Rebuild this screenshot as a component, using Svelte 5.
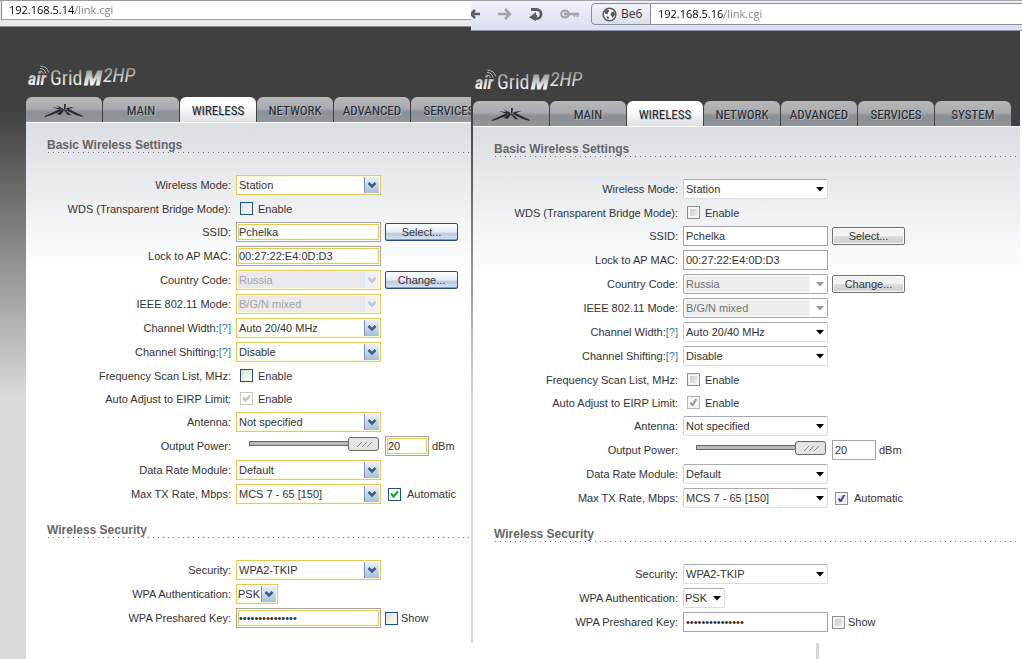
<script lang="ts">
  type Theme = "gold" | "plain";

  const tabs = ["MAIN", "WIRELESS", "NETWORK", "ADVANCED", "SERVICES", "SYSTEM"];

  const basic = [
    { id: "mode", label: "Wireless Mode:", kind: "select", value: "Station" },
    { id: "wds", label: "WDS (Transparent Bridge Mode):", kind: "check" },
    { id: "ssid", label: "SSID:", kind: "text", value: "Pchelka", button: "Select..." },
    { id: "mac", label: "Lock to AP MAC:", kind: "text", value: "00:27:22:E4:0D:D3" },
    { id: "country", label: "Country Code:", kind: "select", value: "Russia", disabled: true, button: "Change..." },
    { id: "ieee", label: "IEEE 802.11 Mode:", kind: "select", value: "B/G/N mixed", disabled: true },
    { id: "width", label: "Channel Width:", help: true, kind: "select", value: "Auto 20/40 MHz" },
    { id: "shift", label: "Channel Shifting:", help: true, kind: "select", value: "Disable" },
    { id: "scan", label: "Frequency Scan List, MHz:", kind: "check" },
    { id: "eirp", label: "Auto Adjust to EIRP Limit:", kind: "check", checked: true, disabled: true },
    { id: "antenna", label: "Antenna:", kind: "select", value: "Not specified" },
    { id: "power", label: "Output Power:", kind: "slider" },
    { id: "module", label: "Data Rate Module:", kind: "select", value: "Default" },
    { id: "rate", label: "Max TX Rate, Mbps:", kind: "select", value: "MCS 7 - 65 [150]", extra: "Automatic", checked: true },
  ];

  const security = [
    { id: "security", label: "Security:", kind: "select", value: "WPA2-TKIP" },
    { id: "auth", label: "WPA Authentication:", kind: "select", value: "PSK", short: true },
    { id: "key", label: "WPA Preshared Key:", kind: "password", value: "pchelka20122013", extra: "Show" },
  ];
</script>

{#snippet logo(theme: Theme)}
  <svg class="logo" width="114" height="34" viewBox="0 -6 114 34" role="img" aria-label="airGrid M2HP">
    <defs>
      <linearGradient id="{theme}-shine" gradientUnits="userSpaceOnUse" x1="0" y1="4" x2="0" y2="22">
        <stop offset="0" stop-color="#8c8c8c" />
        <stop offset="0.6" stop-color="#d8d8d8" />
        <stop offset="1" stop-color="#fff" />
      </linearGradient>
    </defs>
    <g fill="url(#{theme}-shine)">
      <text class="air" x="0" y="21">air</text>
      <text class="grid" x="22" y="21">Grid</text>
      <text class="m" x="56" y="21" stroke="url(#{theme}-shine)">M</text>
      <text class="hp" x="75" y="18">2HP</text>
    </g>
    <g fill="none" stroke="#b5b5b5" stroke-width="1">
      <path d="M12 7q3 0 3.500 3" />
      <path d="M12 4.500q5 0 6 5" />
      <path d="M12.500 2q7 .5 8 6.500" />
    </g>
  </svg>
{/snippet}

{#snippet antennaIcon()}
  <svg width="40" height="14" viewBox="0 0 120 42" aria-hidden="true">
    <g fill="#24272b">
      <path d="M1 37 46 16 54 20 22 33 4 39Z" />
      <path d="M118 37 74 15 65 18 96 33 114 38Z" />
      <path d="M24 10 54 13 58 18 40 15Z" />
      <path d="M92 8 68 12 64 17 78 14Z" />
      <path d="M60 0 66 1 64 16 60 16Z" />
      <path d="M38 31 56 17 61 18 50 32Z" />
      <path d="M82 34 63 17 59 18 72 33Z" />
      <path d="M36 3 58 14 60 18 44 10Z" />
    </g>
  </svg>
{/snippet}

{#snippet row(r: any, theme: Theme)}
  <div class={["row", r.kind === "check" && "tight"]}>
    <div class="label">
      <label for="{theme}-{r.id}">{r.label}</label>{#if r.help}<a href="#help">[?]</a>{/if}
    </div>
    {#if r.kind === "select"}
      <select id="{theme}-{r.id}" class={["field", r.short && "short"]} disabled={r.disabled}>
        <option>{r.value}</option>
      </select>
    {:else if r.kind === "check"}
      <div class="tick">
        <input type="checkbox" id="{theme}-{r.id}" checked={r.checked} disabled={r.disabled} />
        <label for="{theme}-{r.id}">Enable</label>
      </div>
    {:else if r.kind === "slider"}
      <div class="range">
        <input type="range" id="{theme}-{r.id}" min="0" max="20" value="20" />
      </div>
      <span class={["box", "small"]}><input type="text" value="20" aria-label="Output power" /></span>
      <span class="unit">dBm</span>
    {:else}
      <span class="box"><input type={r.kind} id="{theme}-{r.id}" value={r.value} autocomplete="off" /></span>
    {/if}
    {#if r.button}
      <button type="button">{r.button}</button>
    {/if}
    {#if r.extra}
      <div class={["extra", r.checked && "wide"]}>
        <input type="checkbox" id="{theme}-{r.id}-x" checked={r.checked} />
        <label for="{theme}-{r.id}-x">{r.extra}</label>
      </div>
    {/if}
  </div>
{/snippet}

{#snippet settings(theme: Theme)}
  <div class="site">
    <header>{@render logo(theme)}</header>
    <nav>
      <a href="#about" aria-label="About">{@render antennaIcon()}</a>
      {#each tabs as tab}
        <a href="#{tab}" class={[tab === "WIRELESS" && "active"]}>{tab}</a>
      {/each}
    </nav>
    <form class="sheet">
      <h2>Basic Wireless Settings</h2>
      {#each basic as r}
        {@render row(r, theme)}
      {/each}
      <h2 class="second">Wireless Security</h2>
      {#each security as r}
        {@render row(r, theme)}
      {/each}
    </form>
  </div>
{/snippet}

<main>
  <section class="gold">
    <div class="bar">
      <input class="url" type="text" value="192.168.5.14/link.cgi" aria-label="Address" />
    </div>
    {@render settings("gold")}
  </section>

  <section class="plain">
    <div class="bar">
      <div class="tools">
        <button type="button" aria-label="Back">
          <svg width="14" height="14" viewBox="0 0 14 14"><path d="M13 7H4M8 3 4 7l4 4" fill="none" stroke="#5b5d63" stroke-width="2.600" /></svg>
        </button>
        <button type="button" aria-label="Forward">
          <svg width="14" height="14" viewBox="0 0 14 14"><path d="M0 7h11M7 2l5 5-5 5" fill="none" stroke="#a2a4ab" stroke-width="2.500" /></svg>
        </button>
        <button type="button" aria-label="Reload">
          <svg width="14" height="14" viewBox="0 0 14 14"><path d="M2 2.500h5.500a4.600 4.600 0 0 1 0 9.200H6" fill="none" stroke="#5b5d63" stroke-width="2.800" /><path d="M0 10.500 7 5v3h1v2H7v4Z" fill="#5b5d63" /></svg>
        </button>
        <button type="button" aria-label="Password">
          <svg width="20" height="14" viewBox="0 0 20 14"><g fill="none" stroke="#a2a4ab"><ellipse cx="5" cy="7" rx="3.800" ry="3.300" stroke-width="2.200" /><path d="M4 7h15" stroke-width="2.600" /><path d="M14.500 7v3M17.500 7v3" stroke-width="1.500" /></g></svg>
        </button>
      </div>
      <button type="button" class="badge">
        <svg width="15" height="15" viewBox="0 0 15 15"><circle cx="7.500" cy="7.500" r="6.300" fill="#fff" stroke="#55585f" stroke-width="1.600" /><path d="M3 4 6 2.500 7.500 4 6 5.500 5.500 7.500 3 6.500ZM9 5.500l3-1 1 3-2.500 3.500-1-2L8.500 8ZM4.500 9l2.500 1-.5 2.500-1.500-1Z" fill="#55585f" /></svg>
        Be6
      </button>
      <input class="url" type="text" value="192.168.5.16/link.cgi" aria-label="Address" />
    </div>
    {@render settings("plain")}
    <div class="foot"><span></span></div>
  </section>
</main>

<style>
  :global(body) {
    margin: 0;
    background: #fff;
  }

  main {
    display: grid;
    grid-template-columns: minmax(0, 471fr) minmax(0, 551fr);
    min-height: 100vh;
    font: 11px/14px "Liberation Sans", Arial, sans-serif;
    color: #333;
  }

  section {
    display: flex;
    flex-direction: column;
    overflow: hidden;
  }

  input,
  select,
  button {
    box-sizing: border-box;
    margin: 0;
    font: inherit;
    color: inherit;
  }

  /* Browser bars */
  .bar {
    display: flex;
    box-sizing: border-box;
    flex: none;
  }
  .gold .bar {
    height: 27px;
    padding: 0 0 6px 1px;
    background: #ebebee;
    border-top: 1px solid #9a9a9a;
    border-bottom: 1px solid #8b8b8b;
  }
  .plain .bar {
    height: 31px;
    padding: 2px 0 5px;
    background: linear-gradient(#f0f1fa, #dadff0);
    border-top: 1px solid #a8a4ac;
    border-bottom: 1px solid #8e93a8;
  }
  .url {
    flex: 1;
    min-width: 0;
    border: 0;
    padding: 0;
    outline: 0;
    font: 11px/16px "Open Sans", Tahoma, sans-serif;
    color: transparent;
    background:
      linear-gradient(90deg, #000 73px, #808080 73px) text,
      #fff;
  }
  .gold .url {
    padding-left: 7px;
    border-left: 1px solid #8b8b8b;
    border-bottom: 1px solid #9f9f9f;
  }
  .plain .url {
    padding-left: 7px;
    border-top: 1px solid #8a8d99;
    border-bottom: 1px solid #8a8d99;
  }
  .tools {
    display: flex;
    align-items: center;
    flex: none;
    width: 120px;
    gap: 17px;
  }
  .tools button {
    display: flex;
    flex: none;
    padding: 0;
    border: 0;
    background: none;
  }
  .tools button:first-child {
    margin-left: -4px;
  }
  .badge {
    display: flex;
    align-items: center;
    flex: none;
    gap: 4px;
    width: 60px;
    padding: 0 0 0 10px;
    border: 1px solid #8a8d99;
    border-radius: 4px 0 0 4px;
    background: linear-gradient(#f4f5fb, #dcdfec);
    font: 12px/16px "Open Sans", Tahoma, sans-serif;
  }

  /* Router page */
  .site {
    display: flex;
    flex-direction: column;
    flex: 1;
    background: linear-gradient(#404040 83px, #dadada 370px);
  }
  .gold .site {
    padding-left: 26px;
  }
  .plain .site {
    padding-left: 2px;
    border-right: 2px solid #fff;
  }
  header {
    height: 70px;
    box-sizing: border-box;
    padding: 31px 0 0 2px;
    background: #404040;
  }
  .gold header {
    margin-left: -26px;
    padding-left: 28px;
  }
  .logo {
    display: block;
    overflow: visible;
  }
  .air {
    font: italic 700 18px "Liberation Sans Narrow", "Roboto Condensed", "Liberation Sans", sans-serif;
  }
  .grid {
    font: 20px "Liberation Sans Narrow", "Roboto Condensed", sans-serif;
  }
  .m {
    font: italic 700 21px "Liberation Sans", sans-serif;
    stroke-width: 1px;
  }
  .hp {
    font: italic 20px "Liberation Sans Narrow", "Roboto Condensed", sans-serif;
  }

  nav {
    display: flex;
    gap: 1px;
    background: #404040;
  }
  nav a {
    display: flex;
    align-items: center;
    justify-content: center;
    flex: none;
    box-sizing: border-box;
    width: 76px;
    height: 25px;
    padding-top: 2px;
    border-radius: 6px 6px 0 0;
    background: linear-gradient(#b6b8ba, #a9abaf 45%, #8b8f96 60%, #92969d);
    color: #24272b;
    font: 13px/16px "Liberation Sans Narrow", "Roboto Condensed", sans-serif;
    text-decoration: none;
    text-shadow: 1px 1px 0 #b9bcc0;
  }
  nav a.active {
    background: linear-gradient(#fff 35%, #dcdfe4);
  }

  .sheet {
    flex: 1;
    padding: 17px 4px 8px 21px;
    border-top: 1px solid #fff;
    background: linear-gradient(#dbdee3, #fff 150px);
  }
  .gold .sheet {
    padding-right: 0;
  }

  h2 {
    box-sizing: border-box;
    height: 13px;
    margin: 0 0 20px;
    color: #666;
    font: 700 12px/11px "Liberation Sans", Arial, sans-serif;
    background: linear-gradient(90deg, #777 1px, transparent 1px) 1px 100% / 5px 1px repeat-x;
    white-space: nowrap;
  }
  h2.second {
    margin-top: 19px;
  }

  .row {
    display: flex;
    align-items: center;
    height: 24px;
    white-space: nowrap;
  }
  .row.tight {
    height: 23px;
  }
  .label {
    flex: none;
    width: 184px;
    margin-right: 5px;
    text-align: right;
  }
  .label a {
    color: #2f86ad;
    text-decoration: none;
  }

  .field,
  .box {
    flex: none;
    width: 145px;
    height: 20px;
    box-sizing: border-box;
  }
  .field {
    appearance: none;
    padding: 0 20px 0 2px;
    border: 1px solid;
    border-radius: 0;
    outline: 0;
    opacity: 1;
  }
  .field.short {
    width: 42px;
    padding: 0 0 0 1px;
  }
  .box {
    display: flex;
    border: 1px solid #a5a5a5;
    background: #fff;
  }
  .box.small {
    width: 44px;
    margin-left: 5px;
  }
  .box input {
    flex: 1;
    min-width: 0;
    padding: 0 0 0 2px;
    border: 0;
    outline: 0;
    background: none;
  }

  .gold .field {
    border-color: #e5cb55;
    box-shadow: inset 0 0 0 1px #fffbd2;
    background: #fff
      url('data:image/svg+xml,<svg xmlns="http://www.w3.org/2000/svg" width="16" height="18"><defs><linearGradient id="g" x2="0" y2="1"><stop offset="0" stop-color="%23eef4fc"/><stop offset="1" stop-color="%23a3bddf"/></linearGradient></defs><rect x=".5" y=".5" width="15" height="17" rx="1" fill="url(%23g)" stroke="%237b93b3"/><path d="M4.500 7 8 10.500 11.500 7" fill="none" stroke="%23405b7f" stroke-width="2.500"/></svg>')
      right 0 center no-repeat;
  }
  .gold .field:disabled {
    color: #a5a3a6;
    background: #ebe9ec
      url('data:image/svg+xml,<svg xmlns="http://www.w3.org/2000/svg" width="16" height="18"><rect x=".5" y=".5" width="15" height="17" rx="1" fill="%23eef1f6" stroke="%23e2e8f2"/><path d="M4.500 7 8 10.500 11.500 7" fill="none" stroke="%23bcc5d2" stroke-width="2.500"/></svg>')
      right 0 center no-repeat;
  }
  .gold .box {
    padding: 1px;
  }
  .gold .box input {
    border: 1px solid #e5cb55;
    padding: 0;
    box-shadow: inset 0 0 0 1px #fffbd2;
  }

  .plain .field {
    border-color: #a9abb0 #dcdde1 #dcdde1 #d0d1d6;
    border-radius: 2px;
    background: #fff
      url('data:image/svg+xml,<svg xmlns="http://www.w3.org/2000/svg" width="8" height="5"><path d="M0 0h8L4 4.500Z"/></svg>')
      right 3px center no-repeat;
  }
  .plain .field:disabled {
    color: #707070;
    border-color: #a5a7ab;
    background:
      url('data:image/svg+xml,<svg xmlns="http://www.w3.org/2000/svg" width="8" height="5"><path d="M0 0h8L4 4.500Z" fill="%23999"/></svg>')
        right 3px center no-repeat,
      linear-gradient(#eee, #eee) 1px center / 125px 16px no-repeat,
      #fff;
  }

  .row button {
    width: 73px;
    height: 18px;
    margin-left: 4px;
    padding: 0;
    border-radius: 2px;
  }
  .gold .row button {
    border: 1px solid #2f4a7c;
    box-shadow: inset 0 -1px 0 #7d9cc9;
    background: linear-gradient(#fff, #e6ecf6 50%, #b9cae4 60%, #dde6f4);
  }
  .plain .row button {
    border: 1px solid #6f6f6f;
    box-shadow: inset 0 0 0 1px #fbfbfb;
    background: linear-gradient(#f3f3f3 48%, #dcdcdc 50%, #d0d0d0);
  }

  .tick,
  .extra {
    display: flex;
    align-items: center;
    gap: 5px;
  }
  .tick {
    margin-left: 4px;
  }
  .extra {
    gap: 3px;
    margin-left: 4px;
  }
  .extra.wide {
    margin-left: 7px;
    gap: 6px;
  }
  input[type="checkbox"] {
    appearance: none;
    flex: none;
    width: 13px;
    height: 13px;
    border: 1px solid #8e8f8f;
  }
  .gold input[type="checkbox"] {
    border-color: #1d5281;
    background: linear-gradient(135deg, #dcdcd7, #fff);
  }
  .plain input[type="checkbox"] {
    box-shadow: inset 0 0 0 2px #f4f4f4;
    background: linear-gradient(135deg, #bfc3c9, #f3f3f3);
  }
  .gold input[type="checkbox"]:checked {
    background: #fff
      url('data:image/svg+xml,<svg xmlns="http://www.w3.org/2000/svg" width="11" height="11"><path d="M2 4.500 4.500 7.500 9 2.500" fill="none" stroke="%2321a121" stroke-width="2.200"/></svg>');
  }
  .gold input[type="checkbox"]:checked:disabled {
    border-color: #cac8bb;
    background: #fff
      url('data:image/svg+xml,<svg xmlns="http://www.w3.org/2000/svg" width="11" height="11"><path d="M2 4.500 4.500 7.500 9 2.500" fill="none" stroke="%23c0c0c0" stroke-width="2.200"/></svg>');
  }
  .plain input[type="checkbox"]:checked {
    background: #e6e9f0
      url('data:image/svg+xml,<svg xmlns="http://www.w3.org/2000/svg" width="11" height="11"><path d="M2.500 5.500 4.500 8.500 8.500 1.500" fill="none" stroke="%233b4f93" stroke-width="2"/></svg>');
  }
  .plain input[type="checkbox"]:checked:disabled {
    border-color: #b5b5b5;
    background: #f2f2f2
      url('data:image/svg+xml,<svg xmlns="http://www.w3.org/2000/svg" width="11" height="11"><path d="M2.500 5.500 4.500 8.500 8.500 1.500" fill="none" stroke="%239a9a9a" stroke-width="2"/></svg>');
  }

  .range {
    display: flex;
    box-sizing: border-box;
    width: 144px;
    padding: 0 1px 4px 13px;
  }
  input[type="range"] {
    appearance: none;
    width: 130px;
    height: 14px;
    background: linear-gradient(#b9bab8, #b9bab8) 1px 5px / 100px 3px no-repeat,
      linear-gradient(#666, #666) 0 4px / 102px 5px no-repeat;
  }
  input[type="range"]::-webkit-slider-thumb {
    appearance: none;
    width: 31px;
    height: 14px;
    box-sizing: border-box;
    border: 1px solid #666;
    border-radius: 3px;
    background: #e4e4e4
      url('data:image/svg+xml,<svg xmlns="http://www.w3.org/2000/svg" width="16" height="6"><path d="M1 6 6 1M6 6l5-5M11 6l5-5" stroke="%23888"/></svg>')
      center no-repeat;
  }
  .unit {
    margin-left: 3px;
  }

  .foot {
    display: flex;
    height: 16px;
    padding-left: 345px;
    background: #fff;
  }
  .foot span {
    width: 3px;
    background: #d6d6d6;
  }
</style>
